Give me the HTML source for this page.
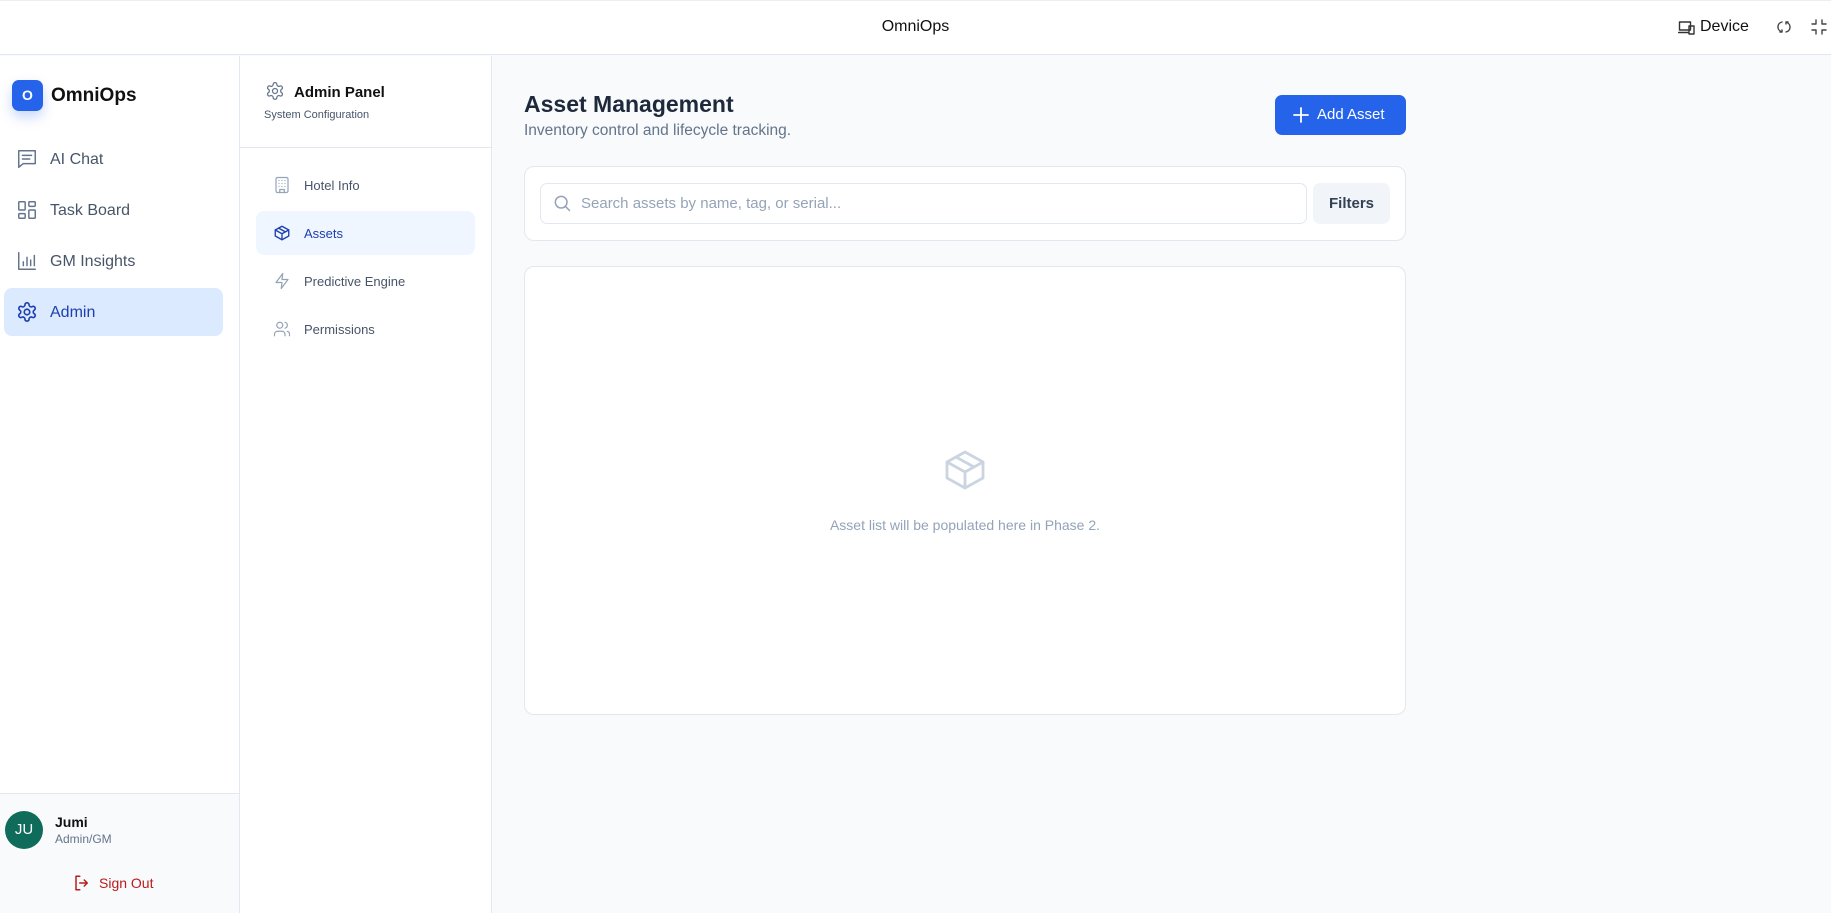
<!DOCTYPE html>
<html><head><meta charset="utf-8"><style>
*{box-sizing:border-box;margin:0;padding:0}
body{width:1831px;height:913px;overflow:hidden;font-family:"Liberation Sans",sans-serif;background:#f8fafc;position:relative;color:#0f172a}
.a{position:absolute}
svg{fill:none;stroke-linecap:round;stroke-linejoin:round}
</style></head><body>
<div class="a" style="left:0;top:0;width:1831px;height:55px;background:#fff;border-bottom:1px solid #e2e8f0;border-top:1px solid #eee"></div>
<div class="a" style="left:0;top:18px;width:1831px;text-align:center;font-size:16px;color:#111">OmniOps</div>
<svg class="a" style="left:1678px;top:20px" width="18" height="16" viewBox="0 0 18 16" stroke="#333" stroke-width="1.4"><rect x="1.5" y="2" width="11" height="8"/><path d="M0.5 12.5h10"/><rect x="11" y="6" width="5" height="8"/></svg>
<div class="a" style="left:1700px;top:18px;font-size:16px;color:#111">Device</div>
<svg class="a" style="left:1776px;top:19px" width="16" height="16" viewBox="0 0 16 16" stroke="#444" stroke-width="1.4"><path d="M6 3A5 5 0 0 0 5 12.5M10 13a5 5 0 0 0 1-9.5M4 13h2v-2M12 3h-2v2"/></svg>
<svg class="a" style="left:1811px;top:19px" width="16" height="16" viewBox="0 0 16 16" stroke="#444" stroke-width="1.4"><path d="M5 1v4H1M11 1v4h4M5 15v-4H1M11 15v-4h4"/></svg>

<div class="a" style="left:0;top:56px;width:240px;height:857px;background:#fff;border-right:1px solid #e2e8f0"></div>
<div class="a" style="left:0;top:793px;width:239px;height:120px;background:#f8fafc;border-top:1px solid #e2e8f0"></div>
<div class="a" style="left:12px;top:80px;width:31px;height:31px;border-radius:7px;background:#2563eb;box-shadow:0 6px 12px rgba(37,99,235,.25);color:#fff;font-weight:bold;font-size:14px;text-align:center;line-height:31px">O</div>
<div class="a" style="left:51px;top:85px;font-size:19px;font-weight:bold;color:#111">OmniOps</div>
<div class="a" style="left:4px;top:288px;width:219px;height:48px;border-radius:8px;background:#dbeafe"></div>
<svg class="a" style="left:16px;top:148px" width="22" height="22" viewBox="0 0 24 24" stroke="#64748b" stroke-width="1.6"><path d="M3 3h18v14H8l-5 4z"/><path d="M7 8h10M7 12h8"/></svg>
<div class="a" style="left:50px;top:151px;font-size:16px;color:#475569">AI Chat</div>
<svg class="a" style="left:16px;top:199px" width="22" height="22" viewBox="0 0 24 24" stroke="#64748b" stroke-width="1.6"><rect x="3" y="3" width="7" height="9" rx="1"/><rect x="14" y="3" width="7" height="5" rx="1"/><rect x="14" y="12" width="7" height="9" rx="1"/><rect x="3" y="16" width="7" height="5" rx="1"/></svg>
<div class="a" style="left:50px;top:202px;font-size:16px;color:#475569">Task Board</div>
<svg class="a" style="left:16px;top:250px" width="22" height="22" viewBox="0 0 24 24" stroke="#64748b" stroke-width="1.6"><path d="M3 3v18h18M8 17v-4M12 17V8M16 17v-6M20 17V6"/></svg>
<div class="a" style="left:50px;top:253px;font-size:16px;color:#475569">GM Insights</div>
<svg class="a" style="left:16px;top:301px" width="22" height="22" viewBox="0 0 24 24" stroke="#1e40af" stroke-width="1.8"><circle cx="12" cy="12" r="3"/><path d="M12.2 2h-.4a2 2 0 0 0-2 2v.2a2 2 0 0 1-1 1.7l-.4.3a2 2 0 0 1-2 0l-.2-.1a2 2 0 0 0-2.7.7l-.2.4a2 2 0 0 0 .7 2.7l.2.1a2 2 0 0 1 1 1.7v.5a2 2 0 0 1-1 1.7l-.2.1a2 2 0 0 0-.7 2.7l.2.4a2 2 0 0 0 2.7.7l.2-.1a2 2 0 0 1 2 0l.4.3a2 2 0 0 1 1 1.7v.2a2 2 0 0 0 2 2h.4a2 2 0 0 0 2-2v-.2a2 2 0 0 1 1-1.7l.4-.3a2 2 0 0 1 2 0l.2.1a2 2 0 0 0 2.7-.7l.2-.4a2 2 0 0 0-.7-2.7l-.2-.1a2 2 0 0 1-1-1.7v-.5a2 2 0 0 1 1-1.7l.2-.1a2 2 0 0 0 .7-2.7l-.2-.4a2 2 0 0 0-2.7-.7l-.2.1a2 2 0 0 1-2 0l-.4-.3a2 2 0 0 1-1-1.7V4a2 2 0 0 0-2-2z"/></svg>
<div class="a" style="left:50px;top:304px;font-size:16px;color:#1e40af">Admin</div>
<div class="a" style="left:5px;top:811px;width:38px;height:38px;border-radius:50%;background:#0f6b5a;color:#fff;font-size:15px;text-align:center;line-height:38px">JU</div>
<div class="a" style="left:55px;top:814px;font-size:14px;font-weight:bold;color:#111">Jumi</div>
<div class="a" style="left:55px;top:832px;font-size:12px;color:#64748b">Admin/GM</div>
<svg class="a" style="left:73px;top:874px" width="18" height="18" viewBox="0 0 24 24" stroke="#b91c1c" stroke-width="2"><path d="M9 3H4v18h5M15 8l4 4-4 4M19 12H9"/></svg>
<div class="a" style="left:99px;top:875px;font-size:14px;color:#b91c1c">Sign Out</div>

<div class="a" style="left:240px;top:56px;width:252px;height:857px;background:#fff;border-right:1px solid #e2e8f0"></div>
<div class="a" style="left:240px;top:147px;width:251px;height:1px;background:#e2e8f0"></div>
<svg class="a" style="left:265px;top:81px" width="20" height="20" viewBox="0 0 24 24" stroke="#64748b" stroke-width="1.5"><circle cx="12" cy="12" r="3"/><path d="M12.2 2h-.4a2 2 0 0 0-2 2v.2a2 2 0 0 1-1 1.7l-.4.3a2 2 0 0 1-2 0l-.2-.1a2 2 0 0 0-2.7.7l-.2.4a2 2 0 0 0 .7 2.7l.2.1a2 2 0 0 1 1 1.7v.5a2 2 0 0 1-1 1.7l-.2.1a2 2 0 0 0-.7 2.7l.2.4a2 2 0 0 0 2.7.7l.2-.1a2 2 0 0 1 2 0l.4.3a2 2 0 0 1 1 1.7v.2a2 2 0 0 0 2 2h.4a2 2 0 0 0 2-2v-.2a2 2 0 0 1 1-1.7l.4-.3a2 2 0 0 1 2 0l.2.1a2 2 0 0 0 2.7-.7l.2-.4a2 2 0 0 0-.7-2.7l-.2-.1a2 2 0 0 1-1-1.7v-.5a2 2 0 0 1 1-1.7l.2-.1a2 2 0 0 0 .7-2.7l-.2-.4a2 2 0 0 0-2.7-.7l-.2.1a2 2 0 0 1-2 0l-.4-.3a2 2 0 0 1-1-1.7V4a2 2 0 0 0-2-2z"/></svg>
<div class="a" style="left:294px;top:84px;font-size:15px;font-weight:bold;color:#111">Admin Panel</div>
<div class="a" style="left:264px;top:109px;font-size:11px;color:#475569">System Configuration</div>
<div class="a" style="left:256px;top:211px;width:219px;height:44px;border-radius:8px;background:#eff6ff"></div>
<svg class="a" style="left:273px;top:176px" width="18" height="18" viewBox="0 0 24 24" stroke="#94a3b8" stroke-width="1.6"><rect x="4" y="2" width="16" height="20" rx="2"/><path d="M9 22v-4h6v4M8 6h0M12 6h0M16 6h0M8 10h0M12 10h0M16 10h0M8 14h0M12 14h0M16 14h0"/></svg>
<div class="a" style="left:304px;top:178px;font-size:13px;color:#475569">Hotel Info</div>
<svg class="a" style="left:273px;top:224px" width="18" height="18" viewBox="0 0 24 24" stroke="#1e40af" stroke-width="1.8"><path d="M21 8l-9-5-9 5v8l9 5 9-5z"/><path d="M3 8l9 5 9-5M12 13v8M7.5 5.5l9 5"/></svg>
<div class="a" style="left:304px;top:226px;font-size:13px;color:#1e40af">Assets</div>
<svg class="a" style="left:273px;top:272px" width="18" height="18" viewBox="0 0 24 24" stroke="#94a3b8" stroke-width="1.6"><path d="M13 2L4 14h8l-1 8 9-12h-8z"/></svg>
<div class="a" style="left:304px;top:274px;font-size:13px;color:#475569">Predictive Engine</div>
<svg class="a" style="left:273px;top:320px" width="18" height="18" viewBox="0 0 24 24" stroke="#94a3b8" stroke-width="1.6"><circle cx="9" cy="7" r="4"/><path d="M2 21v-2a4 4 0 0 1 4-4h6a4 4 0 0 1 4 4v2M16 3.1a4 4 0 0 1 0 7.8M22 21v-2a4 4 0 0 0-3-3.9"/></svg>
<div class="a" style="left:304px;top:322px;font-size:13px;color:#475569">Permissions</div>

<div class="a" style="left:524px;top:91px;font-size:23px;font-weight:bold;color:#1e293b">Asset Management</div>
<div class="a" style="left:524px;top:122px;font-size:15.5px;color:#64748b">Inventory control and lifecycle tracking.</div>
<div class="a" style="left:1275px;top:95px;width:131px;height:40px;border-radius:7px;background:#2563eb;color:#fff;font-size:15px;line-height:40px;padding-left:42px">Add Asset</div>
<svg class="a" style="left:1292px;top:106px" width="18" height="18" viewBox="0 0 18 18" stroke="#fff" stroke-width="1.8"><path d="M9 2v14M2 9h14"/></svg>
<div class="a" style="left:524px;top:166px;width:882px;height:75px;border-radius:10px;background:#fff;border:1px solid #e2e8f0"></div>
<div class="a" style="left:540px;top:183px;width:767px;height:41px;border-radius:7px;background:#fff;border:1px solid #e2e8f0"></div>
<svg class="a" style="left:552px;top:193px" width="20" height="20" viewBox="0 0 24 24" stroke="#94a3b8" stroke-width="1.8"><circle cx="11" cy="11" r="7"/><path d="M21 21l-5-5"/></svg>
<div class="a" style="left:581px;top:195px;font-size:15px;color:#94a3b8">Search assets by name, tag, or serial...</div>
<div class="a" style="left:1313px;top:183px;width:77px;height:41px;border-radius:7px;background:#f1f5f9;font-size:15px;font-weight:bold;color:#334155;text-align:center;line-height:41px">Filters</div>
<div class="a" style="left:524px;top:266px;width:882px;height:449px;border-radius:10px;background:#fff;border:1px solid #e2e8f0"></div>
<svg class="a" style="left:941px;top:446px" width="48" height="48" viewBox="0 0 24 24" stroke="#cbd5e1" stroke-width="1.4"><path d="M21 8l-9-5-9 5v8l9 5 9-5z"/><path d="M3 8l9 5 9-5M12 13v8M7.5 5.5l9 5"/></svg>
<div class="a" style="left:524px;top:517px;width:882px;text-align:center;font-size:14px;color:#94a3b8">Asset list will be populated here in Phase 2.</div>
</body></html>
